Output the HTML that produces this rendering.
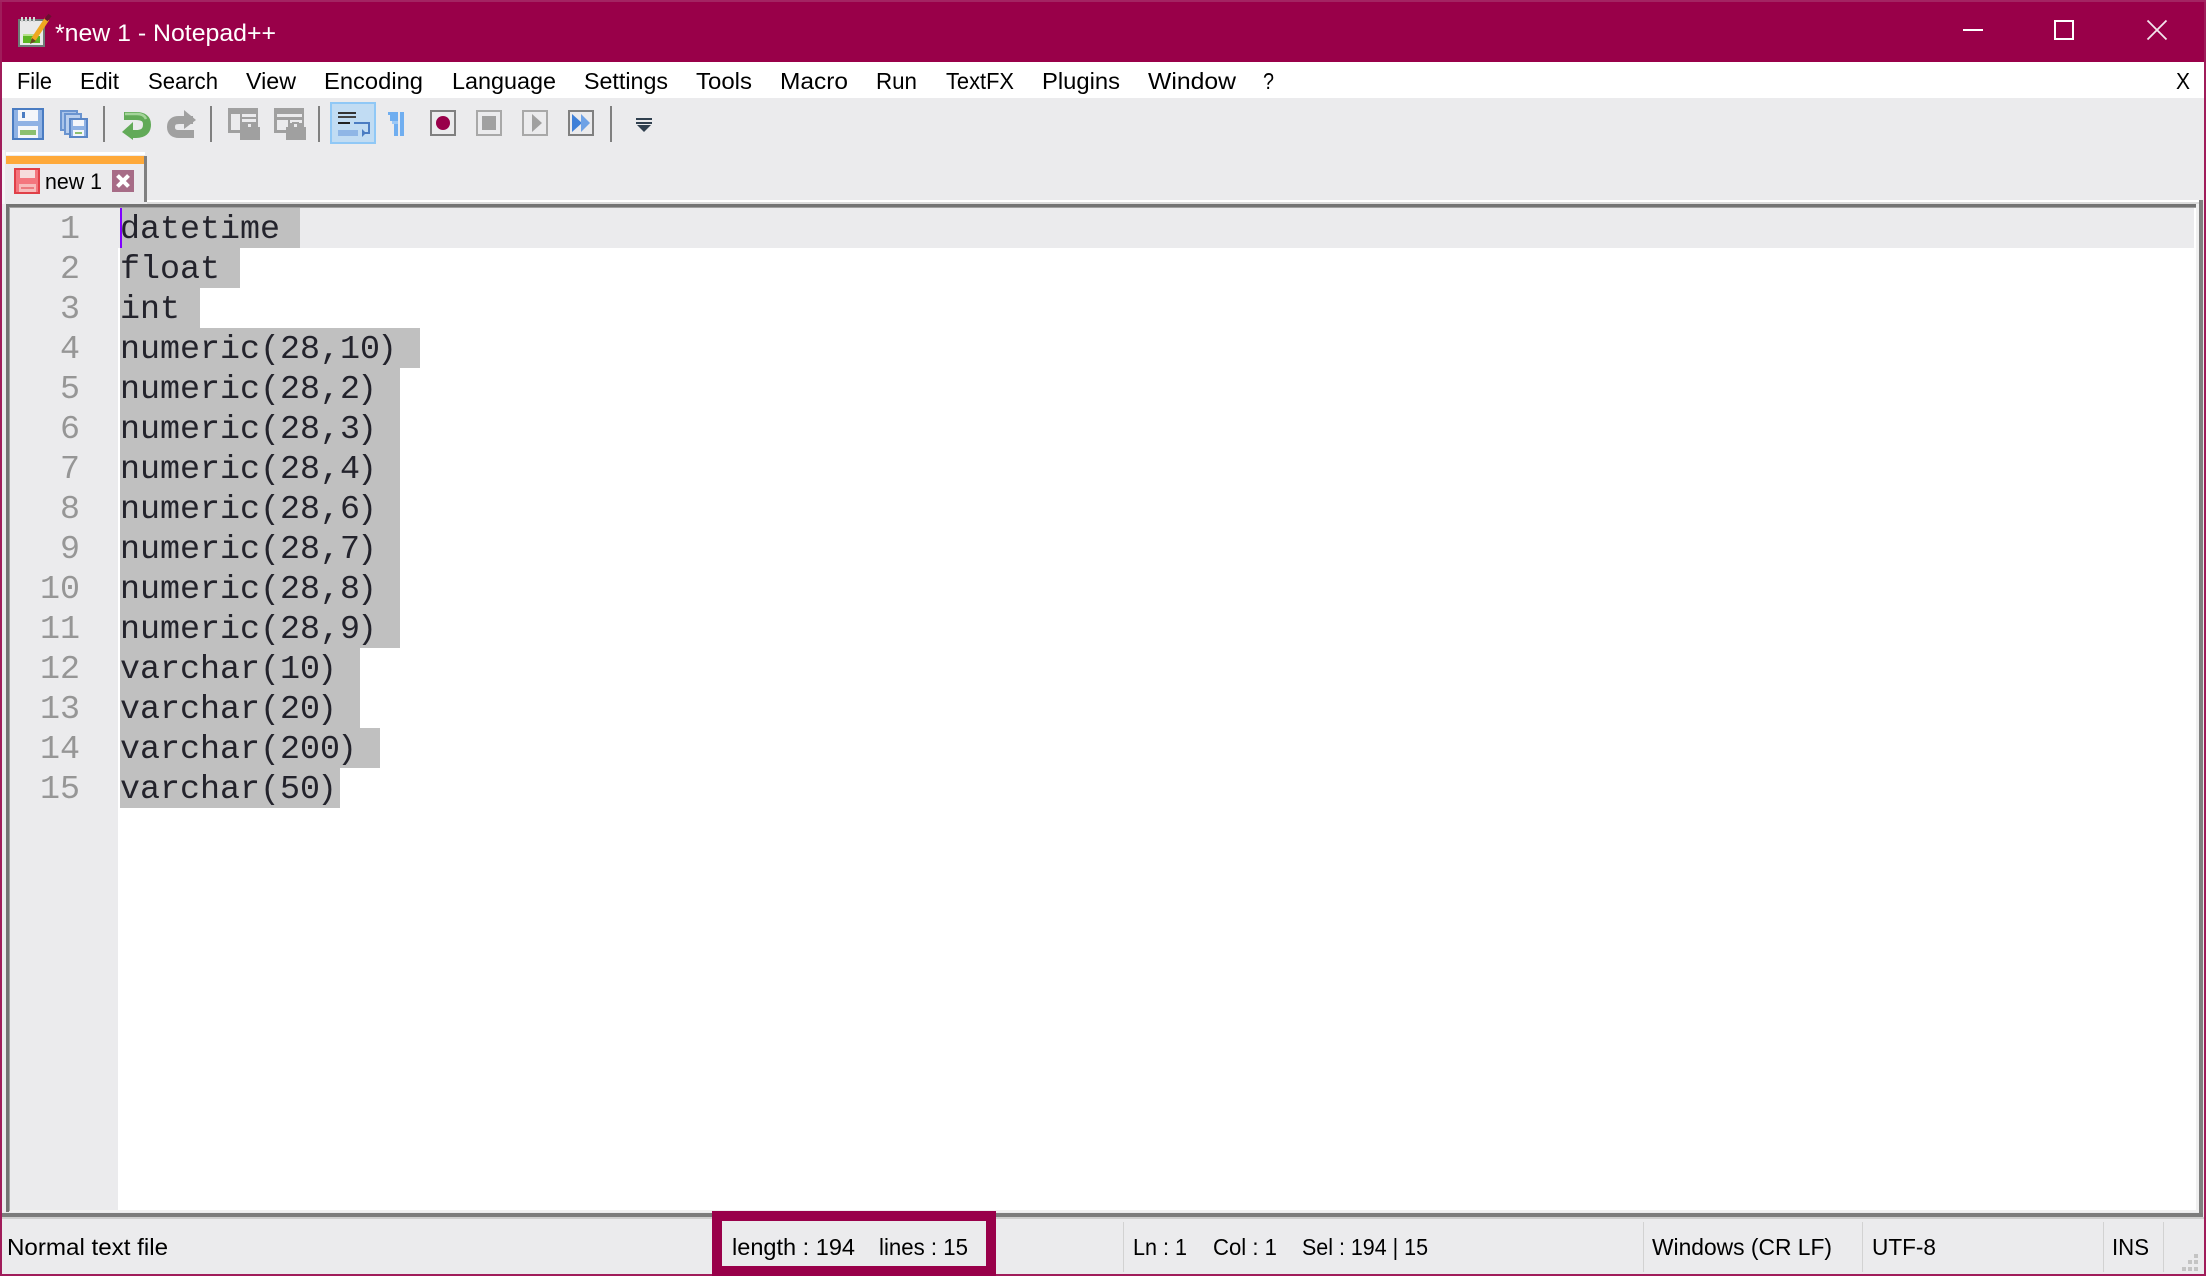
<!DOCTYPE html>
<html><head><meta charset="utf-8"><title>*new 1 - Notepad++</title>
<style>
html,body{margin:0;padding:0;background:#ebebed;overflow:hidden}
svg{display:block}
.s{font-family:"Liberation Sans",sans-serif;fill:#000}
.m{font-size:23.5px}
.c{font-family:"Liberation Mono",monospace;font-size:33.33px;fill:#23232c}
.n{font-family:"Liberation Mono",monospace;font-size:33.33px;fill:#969696}
</style></head><body>
<svg xmlns="http://www.w3.org/2000/svg" width="2206" height="1276" viewBox="0 0 2206 1276">
<!-- frame -->
<rect width="2206" height="1276" fill="#a01c5a"/>
<rect x="2" y="62" width="2202" height="1212" fill="#ebebed"/>
<!-- title -->
<rect x="0" y="0" width="2206" height="2" fill="#a32462"/>
<rect x="2" y="2" width="2202" height="60" fill="#990049"/>
<g>
<rect x="18" y="19" width="27" height="28" fill="#6f7b78"/>
<rect x="20" y="21" width="23" height="24" fill="#e9e9e9"/>
<path d="M22 17v5M26 17v5M30 17v5M34 17v5" stroke="#d8d8d8" stroke-width="2"/>
<rect x="23" y="36" width="17" height="7" fill="#5cb524"/>
<rect x="23" y="34" width="13" height="2" fill="#b6e08a"/>
<path d="M33 40L47 19" stroke="#efa820" stroke-width="5"/>
<path d="M46 20L50 15" stroke="#6b1030" stroke-width="4"/>
<path d="M30 44l2-6 4 3z" fill="#6a4a20"/>
</g>
<text class="s" x="55" y="41" font-size="24" style="fill:#fff" textLength="221" lengthAdjust="spacingAndGlyphs">*new 1 - Notepad++</text>
<rect x="1963" y="29" width="20" height="2" fill="#fff"/>
<rect x="2055" y="21" width="18" height="18" fill="none" stroke="#fff" stroke-width="2"/>
<path d="M2147.500 20.500L2166.500 39.500M2166.500 20.500L2147.500 39.500" stroke="#f4e6ee" stroke-width="1.800" fill="none"/>
<!-- menu -->
<rect x="2" y="62" width="2202" height="36" fill="#fff"/>
<g class="s m">
<text x="17" y="89" textLength="35" lengthAdjust="spacingAndGlyphs">File</text>
<text x="80" y="89" textLength="39" lengthAdjust="spacingAndGlyphs">Edit</text>
<text x="148" y="89" textLength="70" lengthAdjust="spacingAndGlyphs">Search</text>
<text x="246" y="89" textLength="50" lengthAdjust="spacingAndGlyphs">View</text>
<text x="324" y="89" textLength="99" lengthAdjust="spacingAndGlyphs">Encoding</text>
<text x="452" y="89" textLength="104" lengthAdjust="spacingAndGlyphs">Language</text>
<text x="584" y="89" textLength="84" lengthAdjust="spacingAndGlyphs">Settings</text>
<text x="696" y="89" textLength="56" lengthAdjust="spacingAndGlyphs">Tools</text>
<text x="780" y="89" textLength="68" lengthAdjust="spacingAndGlyphs">Macro</text>
<text x="876" y="89" textLength="41" lengthAdjust="spacingAndGlyphs">Run</text>
<text x="946" y="89" textLength="68" lengthAdjust="spacingAndGlyphs">TextFX</text>
<text x="1042" y="89" textLength="78" lengthAdjust="spacingAndGlyphs">Plugins</text>
<text x="1148" y="89" textLength="88" lengthAdjust="spacingAndGlyphs">Window</text>
<text x="1263" y="89" textLength="11" lengthAdjust="spacingAndGlyphs">?</text>
<text x="2176" y="89" textLength="14" lengthAdjust="spacingAndGlyphs">X</text>
</g>
<!-- toolbar -->
<g shape-rendering="crispEdges">
<rect x="103" y="106" width="2" height="36" fill="#808080"/>
<rect x="210" y="106" width="2" height="36" fill="#808080"/>
<rect x="318" y="106" width="2" height="36" fill="#808080"/>
<rect x="610" y="106" width="2" height="36" fill="#808080"/>
</g>
<!-- save -->
<g shape-rendering="crispEdges">
<rect x="12" y="108" width="32" height="32" fill="#4a7cc2"/>
<rect x="14" y="110" width="28" height="28" fill="#8fb2e4"/>
<rect x="18" y="110" width="20" height="11" fill="#f4f6fa"/>
<rect x="22" y="112" width="3" height="6" fill="#4a7cc2"/>
<rect x="18" y="126" width="20" height="12" fill="#f4f6fa"/>
<rect x="20" y="130" width="16" height="5" fill="#8cc070"/>
</g>
<!-- save all -->
<g shape-rendering="crispEdges">
<rect x="61" y="111" width="16" height="19" fill="#a9c4ea" stroke="#6a94d0" stroke-width="2"/>
<rect x="65" y="114" width="16" height="20" fill="#b9cfee" stroke="#6a94d0" stroke-width="2"/>
<rect x="69" y="118" width="19" height="20" fill="#8fb2e4"/>
<rect x="69" y="118" width="19" height="2" fill="#5a86c6"/><rect x="69" y="136" width="19" height="2" fill="#5a86c6"/><rect x="69" y="118" width="2" height="20" fill="#5a86c6"/><rect x="86" y="118" width="2" height="20" fill="#5a86c6"/>
<rect x="73" y="120" width="11" height="6" fill="#f4f6fa"/>
<rect x="73" y="130" width="11" height="6" fill="#f4f6fa"/>
<rect x="75" y="132" width="7" height="2" fill="#8cc070"/>
</g>
<!-- undo -->
<path d="M124 116H136Q147 116 147 124.500Q147 134 136 134H130" fill="none" stroke="#62aa58" stroke-width="8"/>
<path d="M122 132L133 122V140Z" fill="#62aa58"/>
<path d="M125 114H137Q144 114 146 119" fill="none" stroke="#a4d49a" stroke-width="2.500"/>
<!-- redo -->
<path d="M193 120H179Q171 120 171 127Q171 134 179 134H194" fill="none" stroke="#a0a0a0" stroke-width="8"/>
<path d="M196 120L184 110V129Z" fill="#a0a0a0"/>
<!-- sync v -->
<g shape-rendering="crispEdges">
<rect x="228" y="108" width="30" height="25" fill="#a0a0a0"/>
<rect x="231" y="114" width="9" height="16" fill="#ebebed"/>
<rect x="242" y="114" width="14" height="3" fill="#ebebed"/>
<rect x="240" y="127" width="20" height="13" fill="#a0a0a0"/>
<rect x="246" y="122" width="7" height="5" fill="#a0a0a0"/>
<rect x="242" y="119" width="14" height="3" fill="#ebebed"/>
<rect x="248" y="124" width="3" height="3" fill="#ebebed"/>
</g>
<!-- sync h -->
<g shape-rendering="crispEdges">
<rect x="274" y="108" width="30" height="25" fill="#a0a0a0"/>
<rect x="277" y="114" width="25" height="3" fill="#ebebed"/>
<rect x="277" y="120" width="11" height="10" fill="#ebebed"/>
<rect x="290" y="120" width="12" height="3" fill="#ebebed"/>
<rect x="286" y="127" width="20" height="13" fill="#a0a0a0"/>
<rect x="292" y="122" width="7" height="5" fill="#a0a0a0"/>
<rect x="294" y="124" width="3" height="3" fill="#ebebed"/>
</g>
<!-- wrap button -->
<rect x="331" y="103" width="44" height="40" fill="#c1dcf3" stroke="#90c8f6" stroke-width="2"/>
<g shape-rendering="crispEdges">
<rect x="338" y="112" width="18" height="2" fill="#333"/>
<rect x="338" y="116" width="18" height="2" fill="#444"/>
<rect x="338" y="122" width="12" height="2" fill="#222"/>
<rect x="354" y="122" width="16" height="2" fill="#4a7cc2"/>
<rect x="368" y="122" width="2" height="12" fill="#4a7cc2"/>
<rect x="338" y="130" width="20" height="6" fill="#8fb6e6"/>
<rect x="362" y="132" width="8" height="2" fill="#4a7cc2"/>
</g>
<path d="M366 133L362 129V137Z" fill="#4a7cc2"/>
<!-- pilcrow -->
<g shape-rendering="crispEdges"><rect x="394" y="112" width="4" height="24" fill="#70aef0"/><rect x="400" y="112" width="4" height="24" fill="#70aef0"/><rect x="388" y="112" width="10" height="3" fill="#70aef0"/><rect x="390" y="115" width="8" height="6" fill="#70aef0"/><rect x="392" y="121" width="6" height="3" fill="#9cc8f6"/></g>
<!-- macro -->
<rect x="431" y="111" width="24" height="24" fill="none" stroke="#808080" stroke-width="2" shape-rendering="crispEdges"/>
<circle cx="443" cy="123" r="7" fill="#99004a"/>
<rect x="477" y="111" width="24" height="24" fill="none" stroke="#a8a8a8" stroke-width="2" shape-rendering="crispEdges"/>
<rect x="482" y="116" width="14" height="14" fill="#a0a0a0"/>
<rect x="523" y="111" width="24" height="24" fill="none" stroke="#a8a8a8" stroke-width="2" shape-rendering="crispEdges"/>
<path d="M532 114L542 123L532 132Z" fill="#a0a0a0"/>
<rect x="569" y="111" width="24" height="24" fill="none" stroke="#808080" stroke-width="2" shape-rendering="crispEdges"/>
<path d="M572 114L582 123L572 132Z" fill="#3f80d8"/><path d="M581 114L590 123L581 132Z" fill="#6ea2e6"/>
<!-- dropdown -->
<g shape-rendering="crispEdges"><rect x="636" y="118" width="16" height="2" fill="#30404f"/><rect x="636" y="122" width="16" height="2" fill="#30404f"/></g>
<path d="M637 125H651L644 132Z" fill="#30404f"/>
<!-- tab bar -->
<g shape-rendering="crispEdges">
<rect x="2" y="150" width="3" height="54" fill="#f6f6f7"/>
<rect x="6" y="152" width="139" height="3" fill="#fff"/>
<rect x="6" y="156" width="138" height="8" fill="#fea93a"/>
<rect x="144" y="156" width="3" height="46" fill="#808080"/>
<rect x="147" y="200" width="2053" height="2" fill="#fff"/>
<rect x="147" y="202" width="2053" height="2" fill="#dcdcdc"/>
<rect x="6" y="204" width="2194" height="3" fill="#737373"/>
<rect x="6" y="207" width="2190" height="1" fill="#a0a0a0"/>
<!-- tab save red -->
<rect x="14" y="168" width="26" height="26" fill="#e04048"/>
<rect x="16" y="170" width="22" height="22" fill="#f4767e"/>
<rect x="20" y="170" width="15" height="8" fill="#f6dcdc"/>
<rect x="19" y="184" width="17" height="8" fill="#f7bcbc"/>
<rect x="21" y="187" width="13" height="2" fill="#ec7b80"/>
<rect x="112" y="170" width="22" height="22" fill="#a76c87"/>
</g>
<path d="M117.500 175.500L128.500 186.500M128.500 175.500L117.500 186.500" stroke="#fff" stroke-width="4"/>
<text class="s" x="45" y="189" font-size="22" textLength="57" lengthAdjust="spacingAndGlyphs">new 1</text>
<!-- editor -->
<g shape-rendering="crispEdges">
<rect x="6" y="204" width="3" height="1008" fill="#737373"/>
<rect x="9" y="208" width="1" height="1003" fill="#a0a0a0"/>
<rect x="2199" y="200" width="4" height="1018" fill="#808080"/>
<rect x="2196" y="204" width="3" height="1008" fill="#f0f0f0"/>
<rect x="10" y="208" width="2186" height="1002" fill="#fff"/>
<rect x="10" y="208" width="108" height="1002" fill="#ebebed"/>
<rect x="118" y="208" width="2076" height="40" fill="#ebebed"/>
<rect x="118" y="248" width="2" height="962" fill="#fff"/>
<rect x="10" y="1210" width="2186" height="2" fill="#f0f0f0"/>
<rect x="2" y="1213" width="2201" height="4" fill="#7c7c7c"/>
<rect x="2" y="1217" width="2202" height="2" fill="#cfcfcf"/>
<!-- selection -->
<rect x="120" y="208" width="180" height="40" fill="#c0c0c0"/>
<rect x="120" y="248" width="120" height="40" fill="#c0c0c0"/>
<rect x="120" y="288" width="80" height="40" fill="#c0c0c0"/>
<rect x="120" y="328" width="300" height="40" fill="#c0c0c0"/>
<rect x="120" y="368" width="280" height="280" fill="#c0c0c0"/>
<rect x="120" y="648" width="240" height="80" fill="#c0c0c0"/>
<rect x="120" y="728" width="260" height="40" fill="#c0c0c0"/>
<rect x="120" y="768" width="220" height="40" fill="#c0c0c0"/>
<rect x="120" y="208" width="2" height="40" fill="#8000ff"/>
</g>
<g class="n" text-anchor="end">
<text x="80" y="238">1</text><text x="80" y="278">2</text><text x="80" y="318">3</text><text x="80" y="358">4</text><text x="80" y="398">5</text><text x="80" y="438">6</text><text x="80" y="478">7</text><text x="80" y="518">8</text><text x="80" y="558">9</text><text x="80" y="598">10</text><text x="80" y="638">11</text><text x="80" y="678">12</text><text x="80" y="718">13</text><text x="80" y="758">14</text><text x="80" y="798">15</text>
</g>
<g class="c">
<text x="120" y="238">datetime</text>
<text x="120" y="278">float</text>
<text x="120" y="318">int</text>
<text x="120" y="358">numeric(28,10<tspan dx="-3">)</tspan></text>
<text x="120" y="398">numeric(28,2<tspan dx="-3">)</tspan></text>
<text x="120" y="438">numeric(28,3<tspan dx="-3">)</tspan></text>
<text x="120" y="478">numeric(28,4<tspan dx="-3">)</tspan></text>
<text x="120" y="518">numeric(28,6<tspan dx="-3">)</tspan></text>
<text x="120" y="558">numeric(28,7<tspan dx="-3">)</tspan></text>
<text x="120" y="598">numeric(28,8<tspan dx="-3">)</tspan></text>
<text x="120" y="638">numeric(28,9<tspan dx="-3">)</tspan></text>
<text x="120" y="678">varchar(10<tspan dx="-3">)</tspan></text>
<text x="120" y="718">varchar(20<tspan dx="-3">)</tspan></text>
<text x="120" y="758">varchar(200<tspan dx="-3">)</tspan></text>
<text x="120" y="798">varchar(50<tspan dx="-3">)</tspan></text>
</g>
<!-- status bar -->
<g shape-rendering="crispEdges">
<rect x="1123" y="1222" width="1" height="50" fill="#d2d2d2"/>
<rect x="1643" y="1222" width="1" height="50" fill="#d2d2d2"/>
<rect x="1862" y="1222" width="1" height="50" fill="#d2d2d2"/>
<rect x="2103" y="1222" width="1" height="50" fill="#d2d2d2"/>
<rect x="2163" y="1222" width="1" height="50" fill="#d2d2d2"/>
<rect x="0" y="1274" width="2206" height="2" fill="#a01c5a"/>
<rect x="712" y="1211" width="284" height="65" fill="#99004a"/>
<rect x="722" y="1221" width="264" height="45" fill="#ebebed"/>
<g fill="#c4c4c4">
<rect x="2194" y="1254" width="4" height="4"/><rect x="2188" y="1260" width="4" height="4"/><rect x="2194" y="1260" width="4" height="4"/><rect x="2182" y="1267" width="4" height="4"/><rect x="2188" y="1267" width="4" height="4"/><rect x="2194" y="1267" width="4" height="4"/>
</g>
</g>
<g class="s m">
<text x="7" y="1255" textLength="161" lengthAdjust="spacingAndGlyphs">Normal text file</text>
<text x="732" y="1255" textLength="123" lengthAdjust="spacingAndGlyphs">length : 194</text>
<text x="879" y="1255" textLength="89" lengthAdjust="spacingAndGlyphs">lines : 15</text>
<text x="1133" y="1255" textLength="54" lengthAdjust="spacingAndGlyphs">Ln : 1</text>
<text x="1213" y="1255" textLength="64" lengthAdjust="spacingAndGlyphs">Col : 1</text>
<text x="1302" y="1255" textLength="126" lengthAdjust="spacingAndGlyphs">Sel : 194 | 15</text>
<text x="1652" y="1255" textLength="180" lengthAdjust="spacingAndGlyphs">Windows (CR LF)</text>
<text x="1872" y="1255" textLength="64" lengthAdjust="spacingAndGlyphs">UTF-8</text>
<text x="2112" y="1255" textLength="37" lengthAdjust="spacingAndGlyphs">INS</text>
</g>
</svg>
</body></html>
